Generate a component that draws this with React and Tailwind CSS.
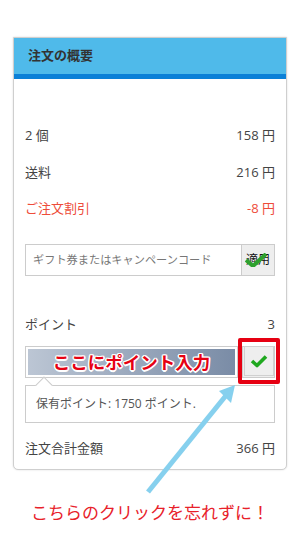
import React from 'react';

const Row = ({ label, value, red }) => (
    <div className={`flex items-center justify-between h-[20px] text-[13px] ${red ? 'text-[#ee4c3a]' : 'text-[#444]'}`}>
        <span>{label}</span>
        <span>{value}</span>
    </div>
);

const App = () => {
    return (
        <div className="relative w-[300px] h-[550px] bg-white font-['Open_Sans','Noto_Sans_CJK_JP',sans-serif]">
            <div className="pt-[37px] pl-[13px]">
                <div className="w-[274px] border border-[#cfcfcf] rounded-b-[5px] bg-white shadow-[0_0_2px_rgba(0,0,0,0.15)]">
                    <div className="h-[36px] bg-[#4fbaea] flex items-center pl-[14px] text-[13px] font-bold text-[#333]">
                        注文の概要
                    </div>
                    <div className="h-[5px] bg-[#0b80d7]" />
                    <div className="px-[11px] pt-[47px] pb-[10px]">
                        <Row label="2 個" value="158 円" />
                        <div className="mt-[17px]"><Row label="送料" value="216 円" /></div>
                        <div className="mt-[16px]"><Row label="ご注文割引" value="-8 円" red /></div>

                        <div className="mt-[25px] flex h-[32px] border border-[#cccccc]">
                            <div className="flex-1 flex items-center pl-[7px] text-[11.2px] text-[#777]">
                                ギフト券またはキャンペーンコード
                            </div>
                            <div className="relative w-[33px] bg-[#eeeeee] border-l border-[#cccccc] flex items-center justify-center text-[12px] text-[#111]">
                                適用
                                <svg className="absolute left-[3px] top-[8px]" width="22" height="14" viewBox="0 0 22 14">
                                    <path d="M1 7 L8 13 L21 1" fill="none" stroke="#2ea12e" strokeWidth="4" strokeLinejoin="round" />
                                </svg>
                            </div>
                        </div>

                        <div className="mt-[39px]"><Row label="ポイント" value="3" /></div>

                        <div className="relative mt-[11px] flex h-[32px]">
                            <div className="flex-1 border border-[#cccccc] p-[2px] flex">
                                <div className="flex-1 bg-gradient-to-r from-[#bcc6d4] to-[#7a8ca6] flex items-center justify-center text-[17.5px] font-bold text-[#e60012] [text-shadow:_1px_1px_0_#fff,_-1px_-1px_0_#fff,_1px_-1px_0_#fff,_-1px_1px_0_#fff,_0_1.5px_0_#fff,_0_-1.5px_0_#fff,_1.5px_0_0_#fff,_-1.5px_0_0_#fff]">
                                    ここにポイント入力
                                </div>
                            </div>
                            <div className="w-[4px]" />
                            <div className="w-[33px] bg-[#eeeeee] border border-[#cccccc]" />
                            <div className="absolute right-[-5px] top-[-8px] w-[42px] h-[46px] border-[4px] border-[#e60012] rounded-[2px] flex items-center justify-center">
                                <div className="w-[30px] h-[30px] bg-[#eeeeee] border border-[#d0d0d0] flex items-center justify-center">
                                    <svg width="18" height="14" viewBox="0 0 18 14">
                                        <path d="M2 7 L7 11.5 L16 2.5" fill="none" stroke="#1fa81f" strokeWidth="3.6" strokeLinejoin="round" />
                                    </svg>
                                </div>
                            </div>
                        </div>

                        <div className="relative mt-[7px] h-[38px] border border-[#cccccc] flex items-center pl-[10px] text-[12px] text-[#555]">
                            保有ポイント: 1750 ポイント.
                            <div className="absolute left-[12px] top-[-7px] w-[12px] h-[12px] bg-white border-l border-t border-[#cccccc] rotate-45" />
                        </div>

                        <div className="mt-[16px]"><Row label="注文合計金額" value="366 円" /></div>
                    </div>
                </div>
            </div>

            <div className="mt-[30px] text-center text-[17px] text-[#e8212a]">
                こちらのクリックを忘れずに！
            </div>

            <svg className="absolute left-0 top-0 pointer-events-none" width="300" height="550" viewBox="0 0 300 550">
                <line x1="148" y1="492" x2="228" y2="393" stroke="#86d0ee" strokeWidth="5" />
                <polygon points="235,385 219,391 231,403" fill="#86d0ee" />
            </svg>
        </div>
    );
};

export default App;
